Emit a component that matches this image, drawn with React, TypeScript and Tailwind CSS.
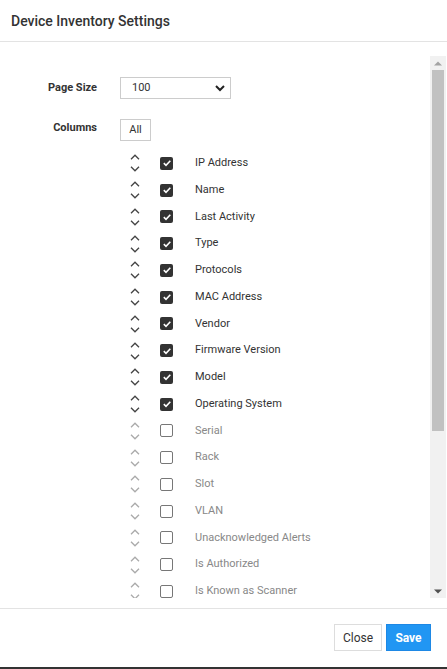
import React from "react";

type Column = { name: string; on: boolean };

const columns: Column[] = [
  { name: "IP Address", on: true },
  { name: "Name", on: true },
  { name: "Last Activity", on: true },
  { name: "Type", on: true },
  { name: "Protocols", on: true },
  { name: "MAC Address", on: true },
  { name: "Vendor", on: true },
  { name: "Firmware Version", on: true },
  { name: "Model", on: true },
  { name: "Operating System", on: true },
  { name: "Serial", on: false },
  { name: "Rack", on: false },
  { name: "Slot", on: false },
  { name: "VLAN", on: false },
  { name: "Unacknowledged Alerts", on: false },
  { name: "Is Authorized", on: false },
  { name: "Is Known as Scanner", on: false },
];

function Sorter({ on }: { on: boolean }) {
  const c = on ? "#444" : "#aaa";
  return (
    <div className="w-[30px] flex flex-col items-center gap-[6px]">
      <svg width="10" height="6" viewBox="0 0 10 6">
        <path d="M1 5.2 L5 1.2 L9 5.2" fill="none" stroke={c} strokeWidth="1.3" />
      </svg>
      <svg width="10" height="6" viewBox="0 0 10 6">
        <path d="M1 0.8 L5 4.8 L9 0.8" fill="none" stroke={c} strokeWidth="1.3" />
      </svg>
    </div>
  );
}

function Check({ on }: { on: boolean }) {
  if (on)
    return (
      <div className="ml-[10px] w-[13px] h-[13px] rounded-[2px] bg-[#333] flex items-center justify-center">
        <svg width="10" height="10" viewBox="0 0 10 10">
          <path d="M1.8 5.2 L4 7.3 L8.3 2.8" fill="none" stroke="#fff" strokeWidth="1.6" />
        </svg>
      </div>
    );
  return <div className="ml-[10px] w-[13px] h-[13px] rounded-[2px] border-[1.5px] border-[#777]" />;
}

function Scrollbar() {
  return (
    <div className="w-[16px] mr-[1px] bg-[#f1f1f1] flex flex-col items-center">
      <div className="h-[14px] flex items-center justify-center">
        <svg width="8" height="5" viewBox="0 0 8 5">
          <path d="M0 4.5 L4 0.5 L8 4.5 Z" fill="#a3a3a3" />
        </svg>
      </div>
      <div className="w-[12px] h-[361px] bg-[#c1c1c1]" />
      <div className="flex-1" />
      <div className="h-[14px] flex items-center justify-center">
        <svg width="8" height="5" viewBox="0 0 8 5">
          <path d="M0 0.5 L8 0.5 L4 4.5 Z" fill="#505050" />
        </svg>
      </div>
    </div>
  );
}

export default function App() {
  return (
    <div className="w-[447px] h-[669px] bg-white flex flex-col text-[#333] font-['Roboto',sans-serif] border-b-2 border-[#333]">
      <div className="h-[42px] px-[11px] pt-[2px] flex items-center border-b border-[#e3e3e3]">
        <h3 className="text-[14px] font-medium text-[#333]">Device Inventory Settings</h3>
      </div>

      <div className="h-[566px] flex pt-[14px] pb-[10px]">
        <div className="flex-1 overflow-hidden pt-[21px]">
          <div className="flex items-center">
            <div className="w-[97px] text-right text-[11px] font-bold text-[#333]">Page Size</div>
            <div className="ml-[23px] w-[111px] h-[22px] border border-[#ccc] flex items-center justify-between pl-[11px] pr-[5px] text-[11px]">
              <span>100</span>
              <svg width="10" height="8" viewBox="0 0 10 8">
                <path d="M1 2 L5 6 L9 2" fill="none" stroke="#222" strokeWidth="2" />
              </svg>
            </div>
          </div>

          <div className="flex mt-[20px]">
            <div className="w-[97px] text-right text-[11px] font-bold text-[#333] pt-[1px]">Columns</div>
            <div className="ml-[23px] flex flex-col">
              <button className="w-[31px] h-[22px] border border-[#ccc] bg-white text-[11px] text-[#333]">
                All
              </button>
              <div className="mt-[9px] flex flex-col">
                {columns.map((c) => (
                  <div key={c.name} className="h-[26.75px] flex items-center">
                    <Sorter on={c.on} />
                    <Check on={c.on} />
                    <span className={`ml-[22px] text-[11px] ${c.on ? "text-[#333]" : "text-[#888]"}`}>
                      {c.name}
                    </span>
                  </div>
                ))}
              </div>
            </div>
          </div>
        </div>
        <Scrollbar />
      </div>

      <div className="flex-1 border-t border-[#e3e3e3] flex justify-end items-start pt-[15px] pr-[16px] gap-[4px]">
        <button className="w-[48px] h-[27px] border border-[#ddd] bg-white text-[12px] text-[#333]">Close</button>
        <button className="w-[45px] h-[27px] border border-[#1e88e5] bg-[#2196f3] text-[12px] font-bold text-white">
          Save
        </button>
      </div>
    </div>
  );
}
